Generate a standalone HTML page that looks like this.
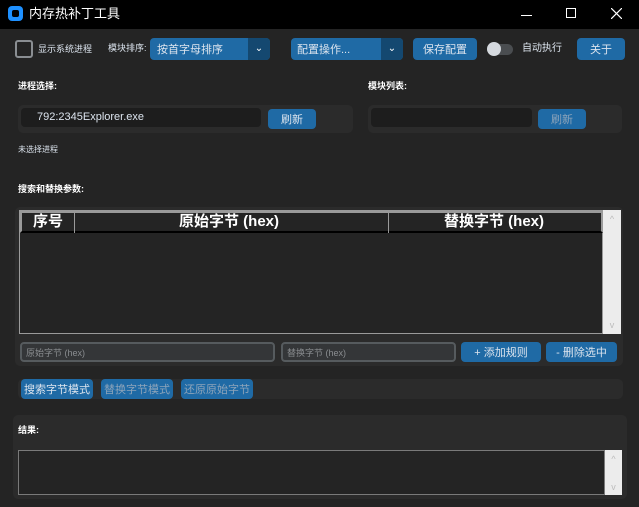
<!DOCTYPE html>
<html><head><meta charset="utf-8"><style>
*{margin:0;padding:0;box-sizing:border-box}
body{width:639px;height:507px;background:#242424;position:relative;overflow:hidden;font-family:"Liberation Sans","Noto Sans CJK SC",sans-serif;color:#dce4ee}
.a{position:absolute}
.t{position:absolute;white-space:nowrap;line-height:1}
.btn{position:absolute;background:#1f6aa5;border-radius:4px;color:#dce4ee;font-size:11px;display:flex;align-items:center;justify-content:center}
.panel{position:absolute;background:#2b2b2b;border-radius:5px}
.entry{position:absolute;background:#343638;border:2px solid #565b5e;border-radius:4px;color:#8a8d90;font-size:9px;display:flex;align-items:center;padding-left:4px}
.b{font-weight:bold;font-size:9px;color:#fff}
</style></head><body>
<div class="a" style="left:0;top:0;width:639px;height:29px;background:#000"></div>
<div class="a" style="left:8px;top:6px;width:15px;height:15px;background:#1e90ff;border-radius:4px"><div class="a" style="left:4px;top:4px;width:7px;height:7px;background:#000;border-radius:2px"></div></div>
<div class="t" style="left:29px;top:7px;font-size:13px;color:#fff">内存热补丁工具</div>
<div class="a" style="left:521px;top:15px;width:11px;height:1px;background:#fff"></div>
<div class="a" style="left:566px;top:8px;width:10px;height:10px;border:1px solid #fff"></div>
<svg class="a" style="left:611px;top:8px" width="11" height="11"><path d="M0 0L11 11M11 0L0 11" stroke="#fff" stroke-width="1.2"/></svg>

<div class="a" style="left:15px;top:40px;width:18px;height:18px;border:2px solid #8a8e92;border-radius:3px"></div>
<div class="t" style="left:38px;top:45px;font-size:9px">显示系统进程</div>
<div class="t" style="left:108px;top:44px;font-size:9px">模块排序:</div>
<div class="btn" style="left:150px;top:38px;width:120px;height:22px;justify-content:flex-start;padding-left:7px">按首字母排序</div>
<div class="a" style="left:248px;top:38px;width:22px;height:22px;background:#144870;border-radius:0 4px 4px 0;color:#fff;font-size:10px;text-align:center;line-height:22px">⌄</div>
<div class="btn" style="left:291px;top:38px;width:112px;height:22px;justify-content:flex-start;padding-left:6px">配置操作...</div>
<div class="a" style="left:381px;top:38px;width:22px;height:22px;background:#144870;border-radius:0 4px 4px 0;color:#fff;font-size:10px;text-align:center;line-height:22px">⌄</div>
<div class="btn" style="left:413px;top:38px;width:64px;height:22px">保存配置</div>
<div class="a" style="left:487px;top:44px;width:26px;height:11px;background:#4a4d50;border-radius:6px"></div>
<div class="a" style="left:487px;top:42px;width:14px;height:14px;background:#d5d9de;border-radius:50%"></div>
<div class="t" style="left:522px;top:44px;font-size:10px">自动执行</div>
<div class="btn" style="left:577px;top:38px;width:48px;height:22px">关于</div>

<div class="t b" style="left:18px;top:82px">进程选择:</div>
<div class="t b" style="left:368px;top:82px">模块列表:</div>
<div class="panel" style="left:18px;top:105px;width:335px;height:28px"></div>
<div class="a" style="left:21px;top:108px;width:240px;height:19px;background:#1d1d1d;border-radius:4px;font-size:11px;padding:3px 0 0 16px;color:#dce4ee">792:2345Explorer.exe</div>
<div class="btn" style="left:268px;top:109px;width:48px;height:20px">刷新</div>
<div class="panel" style="left:368px;top:105px;width:254px;height:28px"></div>
<div class="a" style="left:371px;top:108px;width:161px;height:19px;background:#1d1d1d;border-radius:4px"></div>
<div class="btn" style="left:538px;top:109px;width:48px;height:20px;color:#8da4ba">刷新</div>
<div class="t" style="left:18px;top:146px;font-size:8px">未选择进程</div>

<div class="t b" style="left:18px;top:185px">搜索和替换参数:</div>
<div class="panel" style="left:15px;top:207px;width:608px;height:159px"></div>
<div class="a" style="left:19px;top:210px;width:584px;height:124px;background:#242424;border:1px solid #9a9a9a"></div>
<div class="a" style="left:20px;top:211px;width:583px;height:22px;background:#242424;border:2px solid #9a9a9a;border-bottom:2px solid #000"></div>
<div class="a" style="left:74px;top:211px;width:1px;height:22px;background:#9a9a9a"></div>
<div class="a" style="left:388px;top:211px;width:1px;height:22px;background:#9a9a9a"></div>
<div class="t" style="left:33px;top:214px;font-size:15px;font-weight:bold;color:#fff">序号</div>
<div class="t" style="left:179px;top:214px;font-size:15px;font-weight:bold;color:#fff">原始字节 (hex)</div>
<div class="t" style="left:444px;top:214px;font-size:15px;font-weight:bold;color:#fff">替换字节 (hex)</div>
<div class="a" style="left:603px;top:210px;width:18px;height:124px;background:#ececec;color:#bbb;font-size:9px;text-align:center;padding-top:4px">^<div style="position:absolute;bottom:4px;width:18px">v</div></div>
<div class="entry" style="left:20px;top:342px;width:255px;height:20px">原始字节 (hex)</div>
<div class="entry" style="left:281px;top:342px;width:175px;height:20px">替换字节 (hex)</div>
<div class="btn" style="left:461px;top:342px;width:80px;height:20px">+ 添加规则</div>
<div class="btn" style="left:546px;top:342px;width:71px;height:20px">- 删除选中</div>

<div class="panel" style="left:18px;top:379px;width:605px;height:20px"></div>
<div class="btn" style="left:21px;top:379px;width:72px;height:20px">搜索字节模式</div>
<div class="btn" style="left:101px;top:379px;width:72px;height:20px;color:#8da4ba">替换字节模式</div>
<div class="btn" style="left:181px;top:379px;width:72px;height:20px;color:#8da4ba">还原原始字节</div>

<div class="panel" style="left:13px;top:415px;width:614px;height:84px"></div>
<div class="t b" style="left:18px;top:426px">结果:</div>
<div class="a" style="left:18px;top:450px;width:587px;height:45px;background:#242424;border:1px solid #7a7a7a"></div>
<div class="a" style="left:605px;top:450px;width:17px;height:45px;background:#ececec;color:#bbb;font-size:9px;text-align:center;padding-top:4px">^<div style="position:absolute;bottom:3px;width:17px">v</div></div>
</body></html>
